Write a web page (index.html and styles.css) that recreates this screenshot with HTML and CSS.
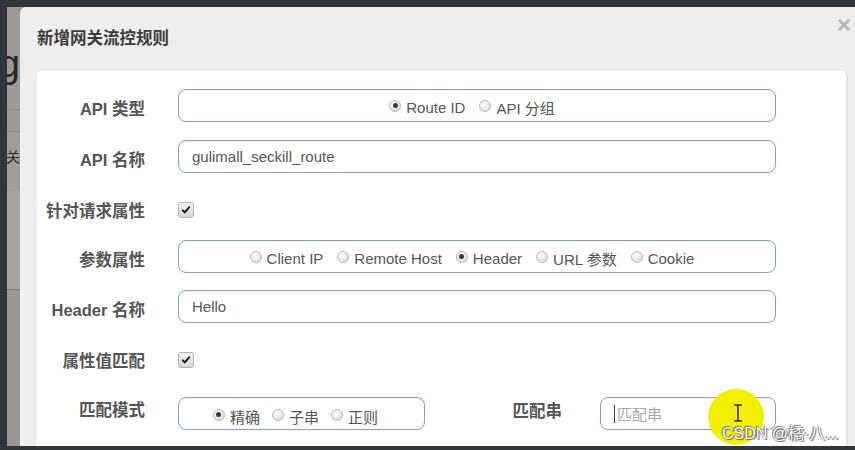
FILE: index.html
```html
<!DOCTYPE html>
<html lang="zh">
<head>
<meta charset="utf-8">
<title>新增网关流控规则</title>
<link rel="stylesheet" href="styles.css">
</head>
<body>
<div class="screen">
  <div class="page">
    <div class="pg-head">Setting</div>
    <div class="pg-line"></div>
    <div class="pg-tab">网关</div>
    <div class="pg-band"></div>
    <div class="pg-dark"></div>
  </div>

  <div class="modal">
    <div class="modal-header">
      <h4 class="modal-title">新增网关流控规则</h4>
      <span class="close">×</span>
    </div>
    <div class="panel">
      <div class="row r1">
        <label class="lbl">API 类型</label>
        <div class="box radios">
          <span class="radio"><span class="dot on"></span>Route ID</span>
          <span class="radio"><span class="dot"></span>API 分组</span>
        </div>
      </div>
      <div class="row r2">
        <label class="lbl">API 名称</label>
        <div class="box text">gulimall_seckill_route</div>
      </div>
      <div class="row r3">
        <label class="lbl">针对请求属性</label>
        <span class="check"><svg viewBox="0 0 14 14" width="14" height="14"><path d="M3.2 7.4 L5.6 9.8 L10.8 3.8" fill="none" stroke="#111" stroke-width="2.2" stroke-linecap="round" stroke-linejoin="round"/></svg></span>
      </div>
      <div class="row r4">
        <label class="lbl">参数属性</label>
        <div class="box radios">
          <span class="radio"><span class="dot"></span>Client IP</span>
          <span class="radio"><span class="dot"></span>Remote Host</span>
          <span class="radio"><span class="dot on"></span>Header</span>
          <span class="radio"><span class="dot"></span>URL 参数</span>
          <span class="radio"><span class="dot"></span>Cookie</span>
        </div>
      </div>
      <div class="row r5">
        <label class="lbl">Header 名称</label>
        <div class="box text">Hello</div>
      </div>
      <div class="row r6">
        <label class="lbl">属性值匹配</label>
        <span class="check"><svg viewBox="0 0 14 14" width="14" height="14"><path d="M3.2 7.4 L5.6 9.8 L10.8 3.8" fill="none" stroke="#111" stroke-width="2.2" stroke-linecap="round" stroke-linejoin="round"/></svg></span>
      </div>
      <div class="row r7">
        <label class="lbl lbl-up">匹配模式</label>
        <div class="box radios small">
          <span class="radio"><span class="dot on"></span>精确</span>
          <span class="radio"><span class="dot"></span>子串</span>
          <span class="radio"><span class="dot"></span>正则</span>
        </div>
        <label class="lbl lbl2">匹配串</label>
        <div class="box text placeholder"><span class="caret"></span>匹配串</div>
      </div>
    </div>
  </div>

  <div class="cursor-mark">
    <svg viewBox="0 0 10 18" width="10" height="18"><path d="M1 1 H9 M5 1 V17 M1 17 H9" fill="none" stroke="#333" stroke-width="1.6"/></svg>
  </div>
  <div class="watermark">CSDN @橘·八...</div>
</div>
</body>
</html>
```

FILE: styles.css
```css
html, body {
  margin: 0;
  padding: 0;
}
body {
  width: 855px;
  height: 450px;
  overflow: hidden;
  background: #30353a;
  font-family: "Liberation Sans", "Noto Sans CJK SC", sans-serif;
}
.screen {
  position: relative;
  margin: 7px 0 0 7px;
  height: 439px;
  background: #9a9a9a;
  overflow: hidden;
}

/* page behind the overlay (only a sliver visible) */
.page {
  width: 13px;
  overflow: hidden;
  display: flex;
  flex-direction: column;
  align-items: flex-end;
}
.pg-head {
  width: 13px;
  height: 102px;
  padding-top: 38px;
  box-sizing: border-box;
  font-size: 38px;
  line-height: 38px;
  color: #262626;
  white-space: nowrap;
  direction: rtl;
  font-family: "Liberation Sans", sans-serif;
}
.pg-line {
  width: 13px;
  height: 21px;
  border-top: 1px solid #8a8a8a;
  background: #9a9a9a;
}
.pg-tab {
  width: 13px;
  height: 60px;
  font-size: 14px;
  line-height: 20px;
  padding-top: 14px;
  box-sizing: border-box;
  color: #2b2b2b;
  white-space: nowrap;
  direction: rtl;
  border-top: 1px solid #8a8a8a;
  background: #9d9d9d;
  font-family: "Noto Sans CJK SC", sans-serif;
}
.pg-band {
  width: 13px;
  height: 98px;
  background: #a4a4a4;
  border-bottom: 1px solid #7a7a7a;
}
.pg-dark {
  width: 13px;
  height: 160px;
  background: #979797;
}

/* modal */
.modal {
  position: absolute;
  left: 13px;
  top: 0;
  right: -12px;
  bottom: 0;
  background: #eeeeee;
  border-radius: 6px 6px 0 0;
  padding: 0 19px 0 17px;
}
.modal-header {
  position: relative;
  height: 64px;
  padding-top: 20px;
  box-sizing: border-box;
}
.modal-title {
  margin: 0;
  font-size: 16.5px;
  line-height: 20px;
  font-weight: bold;
  color: #3c3c3c;
  font-family: "Noto Sans CJK SC", sans-serif;
}
.close {
  position: absolute;
  right: -3px;
  top: 6px;
  font-size: 24px;
  line-height: 24px;
  color: #b5b5b5;
  font-weight: bold;
}
.panel {
  background: #fff;
  border-radius: 5px 5px 0 0;
  padding-top: 18px;
  height: 400px;
  border-right: 2px solid #e2e2e2;
}

.row {
  display: flex;
  align-items: center;
  height: 33px;
}
.r1 { margin-bottom: 18px; }
.r2 { margin-bottom: 20px; }
.r3 { margin-bottom: 14px; }
.r4 { margin-bottom: 17px; }
.r5 { margin-bottom: 20px; }
.r6 { margin-bottom: 21px; }

.lbl {
  width: 108px;
  margin-right: 33px;
  text-align: right;
  font-weight: bold;
  font-size: 16.5px;
  color: #555;
  padding-top: 5px;
  white-space: nowrap;
  font-family: "Liberation Sans", "Noto Sans CJK SC", sans-serif;
}
.r3 .lbl, .r6 .lbl { padding-top: 0; }
.lbl-up {
  padding-top: 0;
  padding-bottom: 10px;
}
.lbl2 {
  width: 137px;
  margin-right: 38px;
  padding-top: 0;
  padding-bottom: 7px;
}

.box {
  box-sizing: border-box;
  width: 598px;
  height: 33px;
  border: 1.5px solid #7fa2c0;
  border-radius: 8px;
  font-size: 15px;
  color: #555;
  box-shadow: inset 0 1px 1px rgba(0,0,0,0.06);
}
.text {
  display: flex;
  align-items: center;
  padding-left: 13px;
}
.placeholder {
  width: 176px;
  color: #a8a8a8;
}
.caret {
  width: 1px;
  height: 18px;
  background: #444;
  margin-right: 2px;
}
.radios {
  display: flex;
  justify-content: center;
  align-items: center;
  gap: 14px;
  padding-top: 3px;
  padding-right: 10px;
}
.small {
  width: 247px;
  gap: 12px;
  padding-top: 5px;
  padding-right: 12px;
}
.radio {
  display: flex;
  align-items: center;
  gap: 5px;
}
.dot {
  width: 12px;
  height: 12px;
  border-radius: 50%;
  box-sizing: border-box;
  border: 1px solid #b9b9b9;
  background: radial-gradient(circle at 40% 35%, #ffffff 0%, #e8e8e8 55%, #cfcfcf 100%);
  display: flex;
  align-items: center;
  justify-content: center;
  margin-top: -3px;
}
.dot.on::after {
  content: "";
  width: 5px;
  height: 5px;
  border-radius: 50%;
  background: #3a3a3a;
}
.check {
  width: 14px;
  height: 14px;
  border-radius: 3px;
  border: 1px solid #b5b5b5;
  background: linear-gradient(#f2f2f2, #d6d6d6);
  display: flex;
  align-items: center;
  justify-content: center;
}
.check svg { width: 12px; height: 12px; }

/* screen-recording overlays */
.cursor-mark {
  position: absolute;
  left: 701px;
  top: 382px;
  width: 56px;
  height: 56px;
  border-radius: 50%;
  background: radial-gradient(circle, #f3ef00 0%, #f3ef00 86%, rgba(243,239,0,0.5) 95%, rgba(243,239,0,0) 100%);
  display: flex;
  align-items: center;
  justify-content: center;
}
.cursor-mark svg { margin-left: 3px; margin-top: -8px; }
.watermark {
  position: absolute;
  left: 715px;
  top: 413px;
  font-size: 16px;
  color: #fff;
  white-space: nowrap;
  font-family: "Liberation Sans", "Noto Sans CJK SC", sans-serif;
  text-shadow: 0 0 1px #555, 1px 1px 1px #666, -1px -1px 1px #777;
}
```
